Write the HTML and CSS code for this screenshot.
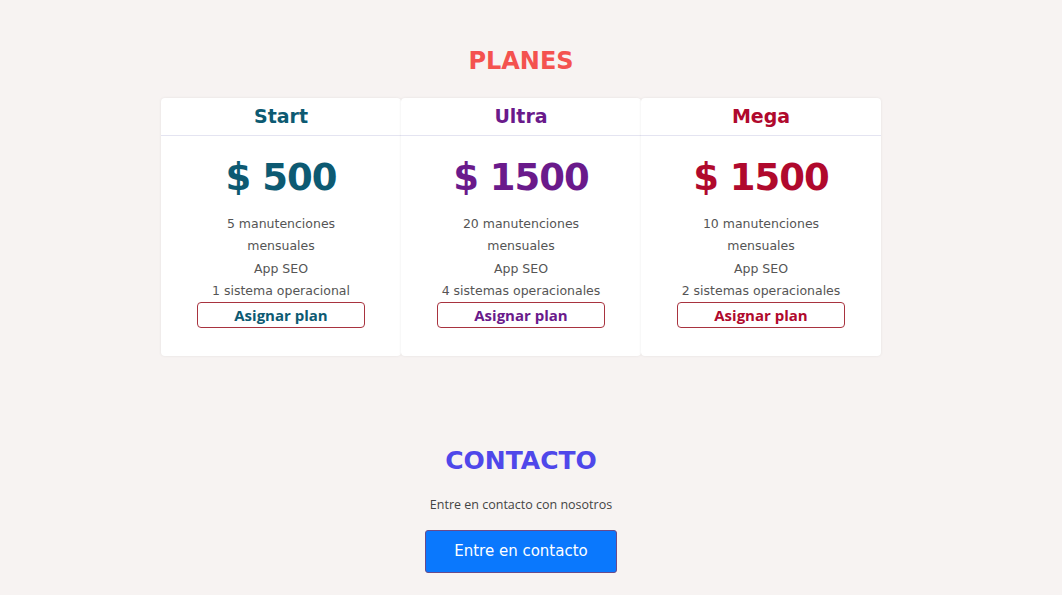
FILE: index.html
```html
<!DOCTYPE html>
<html lang="es">
<head>
<meta charset="utf-8">
<title>Planes</title>
<link rel="stylesheet" href="styles.css">
</head>
<body>
<main class="page">
  <section class="plans">
    <h2 class="section-title plans-title">PLANES</h2>
    <div class="cards">
      <div class="card card-start">
        <div class="card-head">Start</div>
        <div class="card-body">
          <div class="price">$ 500</div>
          <ul class="features">
            <li>5 manutenciones mensuales</li>
            <li>App SEO</li>
            <li>1 sistema operacional</li>
          </ul>
          <button class="assign">Asignar plan</button>
        </div>
      </div>
      <div class="card card-ultra">
        <div class="card-head">Ultra</div>
        <div class="card-body">
          <div class="price">$ 1500</div>
          <ul class="features">
            <li>20 manutenciones mensuales</li>
            <li>App SEO</li>
            <li>4 sistemas operacionales</li>
          </ul>
          <button class="assign">Asignar plan</button>
        </div>
      </div>
      <div class="card card-mega">
        <div class="card-head">Mega</div>
        <div class="card-body">
          <div class="price">$ 1500</div>
          <ul class="features">
            <li>10 manutenciones mensuales</li>
            <li>App SEO</li>
            <li>2 sistemas operacionales</li>
          </ul>
          <button class="assign">Asignar plan</button>
        </div>
      </div>
    </div>
  </section>
  <section class="contact">
    <h2 class="section-title contact-title">CONTACTO</h2>
    <p class="contact-text">Entre en contacto con nosotros</p>
    <button class="contact-btn">Entre en contacto</button>
  </section>
</main>
</body>
</html>
```

FILE: styles.css
```css
* { box-sizing: border-box; }
html, body { margin: 0; padding: 0; }
body {
  background: #f7f3f2;
  font-family: "DejaVu Sans", "Open Sans", sans-serif;
  color: #444;
}
.page {
  width: 1042px;
  display: flex;
  flex-direction: column;
  align-items: center;
}
.section-title {
  margin: 0;
  font-weight: bold;
  text-align: center;
}
.plans {
  padding-top: 46px;
  display: flex;
  flex-direction: column;
  align-items: center;
}
.plans-title {
  font-size: 24px;
  line-height: 30px;
  color: #f4524f;
}
.cards {
  margin-top: 22px;
  display: flex;
  gap: 0;
}
.card {
  width: 240px;
  background: #fff;
  border-radius: 4px;
  box-shadow: 0 0 3px rgba(0, 0, 0, 0.08);
  text-align: center;
}
.card-head {
  height: 38px;
  line-height: 37px;
  border-bottom: 1px solid #e4e4f1;
  font-size: 19px;
  font-weight: bold;
}
.card-body {
  padding: 19px 0 28px;
  display: flex;
  flex-direction: column;
  align-items: center;
}
.price {
  font-size: 37px;
  line-height: 46px;
  font-weight: bold;
  letter-spacing: -1px;
}
.features {
  list-style: none;
  margin: 12px 0 0;
  padding: 0;
  max-width: 176px;
  font-size: 12.5px;
  line-height: 22.4px;
  color: #555;
}
.features li { margin: 0; }
.assign {
  margin-top: -1px;
  width: 168px;
  height: 26px;
  background: #fff;
  border: 1px solid #a8333f;
  border-radius: 4px;
  font-family: "Open Sans", sans-serif;
  font-weight: bold;
  font-size: 15px;
  line-height: 22px;
  padding: 0;
  cursor: pointer;
}
.card-start .card-head, .card-start .price, .card-start .assign { color: #0d5a72; }
.card-ultra .card-head, .card-ultra .price, .card-ultra .assign { color: #6a1a8b; }
.card-mega .card-head, .card-mega .price, .card-mega .assign { color: #b0092d; }

.contact {
  padding-top: 89px;
  display: flex;
  flex-direction: column;
  align-items: center;
}
.contact-title {
  font-size: 25px;
  line-height: 32px;
  color: #4f47ea;
}
.contact-text {
  margin: 19px 0 0;
  font-family: "Open Sans", sans-serif;
  font-size: 12.5px;
  line-height: 18px;
  color: #444;
}
.contact-btn {
  margin-top: 16px;
  width: 192px;
  height: 43px;
  background: #0a78fd;
  border: 1px solid #6a4a8a;
  border-radius: 3px;
  color: #fff;
  font-family: "DejaVu Sans", sans-serif;
  font-size: 15px;
  padding: 0;
}
```
